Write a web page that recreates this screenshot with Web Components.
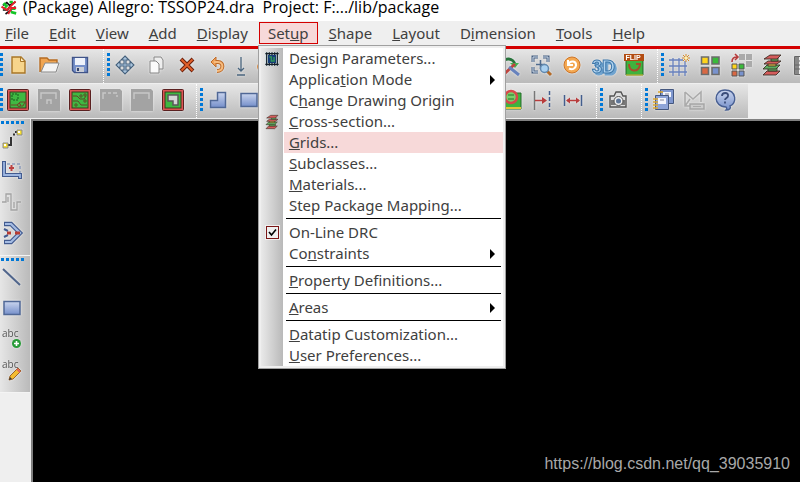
<!DOCTYPE html>
<html lang="en">
<head>
<meta charset="utf-8">
<title>Allegro</title>
<style>
    body {
        margin: 0;
        font: 15px/21px "Noto Sans", "Open Sans", sans-serif;
        color: #404040;
        background: #efefef;
    }
</style>
</head>
<body>
<allegro-window>
    <title-bar slot="title">(Package) Allegro: TSSOP24.dra  Project: F:.../lib/package</title-bar>
    <menu-bar slot="menu">
        <menu-entry><u>F</u>ile</menu-entry>
        <menu-entry><u>E</u>dit</menu-entry>
        <menu-entry><u>V</u>iew</menu-entry>
        <menu-entry><u>A</u>dd</menu-entry>
        <menu-entry><u>D</u>isplay</menu-entry>
        <menu-entry open>Set<u>u</u>p
            <drop-menu slot="popup">
                <menu-item icon="board">Desi<u>g</u>n Parameters...</menu-item>
                <menu-item more>Applica<u>t</u>ion Mode</menu-item>
                <menu-item>C<u>h</u>ange Drawing Origin</menu-item>
                <menu-item icon="section"><u>C</u>ross-section...</menu-item>
                <menu-item active><u>G</u>rids...</menu-item>
                <menu-item><u>S</u>ubclasses...</menu-item>
                <menu-item><u>M</u>aterials...</menu-item>
                <menu-item>Step Package Mapping...</menu-item>
                <menu-line></menu-line>
                <menu-check>On-Line DRC</menu-check>
                <menu-item more>Co<u>n</u>straints</menu-item>
                <menu-line></menu-line>
                <menu-item><u>P</u>roperty Definitions...</menu-item>
                <menu-line></menu-line>
                <menu-item more><u>A</u>reas</menu-item>
                <menu-line></menu-line>
                <menu-item><u>D</u>atatip Customization...</menu-item>
                <menu-item><u>U</u>ser Preferences...</menu-item>
            </drop-menu>
        </menu-entry>
        <menu-entry><u>S</u>hape</menu-entry>
        <menu-entry><u>L</u>ayout</menu-entry>
        <menu-entry>D<u>i</u>mension</menu-entry>
        <menu-entry><u>T</u>ools</menu-entry>
        <menu-entry><u>H</u>elp</menu-entry>
    </menu-bar>

    <tool-row slot="tools">
        <tool-group first>
            <tool-button icon="new" label="New"></tool-button>
            <tool-button icon="open" label="Open"></tool-button>
            <tool-button icon="save" label="Save"></tool-button>
        </tool-group>
        <tool-group>
            <tool-button icon="move" label="Move"></tool-button>
            <tool-button icon="copy" label="Copy"></tool-button>
            <tool-button icon="remove" label="Delete"></tool-button>
            <tool-button icon="undo" label="Undo"></tool-button>
            <tool-button icon="down" label="Undo list" narrow></tool-button>
            <tool-button icon="redo" label="Redo"></tool-button>
            <tool-button icon="down" label="Redo list" narrow></tool-button>
        </tool-group>
        <tool-group>
            <tool-button icon="zoom" label="Zoom points"></tool-button>
            <tool-button icon="zoom" label="Zoom fit"></tool-button>
            <tool-button icon="zoom" label="Zoom in"></tool-button>
            <tool-button icon="zoom" label="Zoom out"></tool-button>
            <tool-button icon="zoom" label="Zoom previous"></tool-button>
            <tool-button icon="zoom" label="Zoom world"></tool-button>
            <tool-button icon="tour" label="Zoom center"></tool-button>
            <tool-button icon="zoom" label="Zoom selection"></tool-button>
            <tool-button icon="redraw" label="Redraw"></tool-button>
            <tool-button icon="view3d" label="3D view"></tool-button>
            <tool-button icon="flip" label="Flip design"></tool-button>
        </tool-group>
        <tool-group grow>
            <tool-button icon="grid" label="Grid toggle"></tool-button>
            <tool-button icon="colors" label="Color"></tool-button>
            <tool-button icon="swap" label="Swap colors"></tool-button>
            <tool-button icon="section" label="Cross-section"></tool-button>
            <tool-button icon="sheet" label="Constraint manager"></tool-button>
        </tool-group>
    </tool-row>
    <tool-row slot="tools">
        <tool-group first>
            <tool-button icon="etch" label="General edit"></tool-button>
            <tool-button icon="off1" label="Placement edit"></tool-button>
            <tool-button icon="route" label="Etch edit"></tool-button>
            <tool-button icon="off2" label="Flow planning"></tool-button>
            <tool-button icon="off3" label="Signal integrity"></tool-button>
            <tool-button icon="shapeEdit" label="Shape edit"></tool-button>
        </tool-group>
        <tool-group>
            <tool-button icon="poly" label="Shape add"></tool-button>
            <tool-button icon="rect" label="Shape add rectangle"></tool-button>
            <tool-button icon="rect" label="Shape add circle"></tool-button>
            <tool-button icon="poly" label="Shape select"></tool-button>
            <tool-button icon="poly" label="Shape void"></tool-button>
        </tool-group>
        <tool-group>
            <tool-button icon="rect" label="Void rectangle"></tool-button>
            <tool-button icon="poly" label="Void element"></tool-button>
            <tool-button icon="rect" label="Island delete"></tool-button>
            <tool-button icon="poly" label="Edit boundary"></tool-button>
            <tool-button icon="target" label="Show element"></tool-button>
            <tool-button icon="toLine" label="Measure"></tool-button>
            <tool-button icon="width" label="Dimension"></tool-button>
        </tool-group>
        <tool-group>
            <tool-button icon="camera" label="Snapshot"></tool-button>
        </tool-group>
        <tool-group>
            <tool-button icon="books" label="Reports"></tool-button>
            <tool-button icon="mail" label="Mail"></tool-button>
            <tool-button icon="help" label="Help"></tool-button>
        </tool-group>
    </tool-row>

    <tool-group slot="side" vertical>
        <tool-button icon="connect" label="Add connect"></tool-button>
        <tool-button icon="slide" label="Slide"></tool-button>
        <tool-button icon="delay" label="Delay tune"></tool-button>
        <tool-button icon="smooth" label="Custom smooth"></tool-button>
    </tool-group>
    <tool-group slot="side" vertical>
        <tool-button icon="line" label="Add line"></tool-button>
        <tool-button icon="rect" label="Add rectangle"></tool-button>
        <tool-button icon="textAdd" label="Add text"></tool-button>
        <tool-button icon="textEdit" label="Edit text"></tool-button>
    </tool-group>

    <a slot="canvas" href="https://blog.csdn.net/qq_39035910">https://blog.csdn.net/qq_39035910</a>
</allegro-window>

<script>
const board = (inner) => `
    <rect x="1.5" y="1.5" width="21" height="21" rx="1" fill="#dc5454" stroke="#5a2020"/>
    <rect x="4" y="4" width="16" height="16" fill="#3fb842" stroke="#3c3a1c"/>${inner}`;
const disabled = (inner) => `
    <path d="M1 1h20l2 2v20H1z" fill="#a3a3a3"/>
    <g fill="none" stroke="#c8c8c8" stroke-width="1.4">${inner}</g>`;
const blueFill = `
    <defs><linearGradient id="b" x2="0" y2="1"><stop stop-color="#cad5ee"/><stop offset="1" stop-color="#758fca"/></linearGradient></defs>`;
const lens = `
    <path d="M18 18l4 4" stroke="#b36a28" stroke-width="3"/>
    <circle cx="15.5" cy="15.5" r="4" fill="#a9d0f0" stroke="#6188ae" stroke-width="1.5"/>`;

const icons = {
    new: `<path d="M6 4h9l4 4v12H6z" fill="#f7d58c" stroke="#a87526" stroke-width="1.4"/><path d="M14.5 4v4.500H19z" fill="#fff0c4" stroke="#a87526"/>`,
    open: `<path d="M3 19V5h7l2 2h8v5" fill="#f0a552" stroke="#b46b22" stroke-width="1.4"/>
        <path d="M4 19l4-9h14l-3 9z" fill="#f4f4f4" stroke="#888"/>`,
    save: `<path d="M4.5 4.5h15v15h-13l-2-2z" fill="#7690ca" stroke="#405488" stroke-width="1.4"/>
        <path d="M7 5h10v7H7z" fill="#eef2fb"/><path d="M8 14h8v5H8z" fill="#c9cdd6"/><path d="M9 15h2v3H9z" fill="#33436d"/>`,
    move: `<path d="M12 3l4 4h-3v4h4V8l4 4-4 4v-3h-4v4h3l-4 4-4-4h3v-4H7v3l-4-4 4-4v3h4V7H8z" fill="#a9c4dd" stroke="#46617c" stroke-width="1.1"/>`,
    copy: `<path d="M10 4h7l2 3v9h-9z" fill="#eee" stroke="#858585"/><path d="M6 8h6l3 3v9H6z" fill="#fafafa" stroke="#858585"/>`,
    remove: `<path d="M6 6l12 12M18 6L6 18" stroke="#6b220d" stroke-width="4"/><path d="M6.500 6.500l11 11M17.500 6.500l-11 11" stroke="#e4602a" stroke-width="1.8"/>`,
    undo: `<path d="M8 9h4c6 0 6 9-1 9" fill="none" stroke="#bd6b2a" stroke-width="4"/><path d="M10 4v10L5 9z" fill="#f1a25a" stroke="#bd6b2a"/>
        <path d="M8 9h4c6 0 6 9-1 9" fill="none" stroke="#f7bc7e" stroke-width="2"/>`,
    redo: `<path d="M15 10h-4c-6 0-6 8 1 8" fill="none" stroke="#d98234" stroke-width="3"/><path d="M14 5v10l5-5z" fill="#f1a25a"/>`,
    down: `<path d="M12 4v14M9 15l3 3 3-3M8 22h8" fill="none" stroke="#49647d" stroke-width="1.3"/>`,
    zoom: `<path d="M4 9V4h5M14 4h5v5M4 14v5h5" fill="none" stroke="#475f80" stroke-width="3"/><path d="M4 9V4h5M14 4h5v5M4 14v5h5" fill="none" stroke="#d3e0ee"/>
        <path d="M11.5 7v9M7 11.5h9" stroke="#4f6b8e" stroke-width="1.6"/>${lens}`,
    tour: `<path d="M4 12c2-9 12-7 13 0" fill="none" stroke="#26733b" stroke-width="3"/><path d="M12 10h9l-4 5z" fill="#3fb452"/>
        <path d="M5 22L17 11" stroke="#be443e" stroke-width="3"/><path d="M11 14l10 8" stroke="#6782bd" stroke-width="3"/>`,
    redraw: `<circle cx="12" cy="12" r="8" fill="#f4a851" stroke="#cb7428"/><path d="M8 7v5h5M8.500 11c2-4 8-3 7.500 1.500-.5 3.500-4 4.500-7 3" fill="none" stroke="#fff" stroke-width="2"/>`,
    view3d: `<text x="1" y="20" font-family="Liberation Sans, sans-serif" font-size="18" font-weight="bold" fill="#aed2ef" stroke="#3d76a8" style="filter: drop-shadow(2px 2px 0 #6fa3cf)">3D</text>`,
    flip: `<path d="M4 7h17v15H4z" fill="#3fb23e" stroke="#25682a"/><path d="M4 22h17" stroke="#e4c63a"/><path d="M7 11c0 8 9 9 11 1M14 11h5" fill="none" stroke="#a94d2c" stroke-width="2"/>
        <path d="M2 1h20v7H2z" fill="#b24c12"/><text x="3.500" y="7" font-family="Liberation Sans, sans-serif" font-size="7" font-weight="bold" fill="#fff">FLIP</text>`,
    grid: `<path d="M6 5v18M12 5v18M18 8v15M2 7h14M2 13h18M2 19h18" stroke="#6780bd" stroke-width="1.3"/>
        <path d="M19 1v8M15 5h8M16 2l6 6M22 2l-6 6" stroke="#d58a2b"/><circle cx="19" cy="5" r="1.5" fill="#fff3b0"/>`,
    colors: `<g stroke="#6c6c6c" stroke-width="1.6"><path d="M3.500 4h7v7h-7z" fill="#ffd51c"/><path d="M14 4h7v7h-7z" fill="#3aba3a"/>
        <path d="M3.500 14.500h7v7h-7z" fill="#d96843"/><path d="M14 14.500h7v7h-7z" fill="#7892cd"/></g>`,
    swap: `<path d="M10 1h6v6h-6zM17 1h6v6h-6zM17 8h6v6h-6z" fill="#aaa"/><g stroke="#555"><path d="M3 11h5v5H3z" fill="#ffd51c"/><path d="M10 11h5v5h-5z" fill="#3aba3a"/>
        <path d="M3 18h5v5H3z" fill="#d96843"/><path d="M10 18h5v5h-5z" fill="#7892cd"/></g><path d="M3 9c0-4 2-5 5-5M6 1l3 3-3 3" fill="none" stroke="#b63a3a" stroke-width="1.6"/>`,
    section: `<g stroke="#3b3027" stroke-width=".9"><path d="M7 18h13l-4 4H3z" fill="#d45c5c"/><path d="M8 15h9v3H8z" fill="#62b865"/><path d="M7 12h13l-4 4H3z" fill="#5eae60"/>
        <path d="M8 10h8v3H8z" fill="#f3c74c"/><path d="M8 8h13l-4 3H4z" fill="#d45c5c"/><path d="M11 5h7v3h-7z" fill="#62b865"/><path d="M10 2h11l-4 4H4l3-2z" fill="#d45c5c"/></g>`,
    sheet: `<path d="M3.500 3.500h22v18h-22z" fill="#eee" stroke="#666"/><path d="M4 4h4v17H4z" fill="#888"/><path d="M8 8h16M4 12h20M4 16h20" stroke="#666"/>
        <path d="M9 4h12v4H9z" fill="#3c5da7"/><path d="M9 12h12v3H9z" fill="#e22"/><path d="M9 17h12v3H9z" fill="#3b3"/>`,
    etch: board(`<path d="M6 6h6v6H6z" fill="none" stroke="#175b1d" stroke-dasharray="2 1"/><path d="M5 17h7l2-3h6M14 18h3l2-4" fill="none" stroke="#704526"/><circle cx="13" cy="17" r="1.5" fill="#3fb842" stroke="#704526"/>`),
    route: board(`<path d="M5 8h4l3 3h4l2-3M5 13h5l3 4h6" fill="none" stroke="#5c4926"/><g fill="#3fb842" stroke="#5c4926"><circle cx="13" cy="8" r="1.2"/><circle cx="17" cy="7" r="1.2"/><circle cx="17" cy="13" r="1.2"/><circle cx="8" cy="17" r="1.2"/></g>`),
    shapeEdit: board(`<path d="M7 7h10v10h-5v-4H7z" fill="#d5d5d5" stroke="#5a5a5a" stroke-width="1.5"/>`),
    off1: disabled(`<path d="M4 11V5h15v6M10 16v-4h4v4"/>`),
    off2: disabled(`<path d="M4 11V5h3M9 5h3M14 5h4M18 7v2"/>`),
    off3: disabled(`<path d="M4 11V5h15v6"/>`),
    poly: `${blueFill}<path d="M11.5 4.500h8v15h-15v-7h7z" fill="url(#b)" stroke="#506896" stroke-width="1.5"/>`,
    rect: `${blueFill}<path d="M4 5.500h16v13H4z" fill="url(#b)" stroke="#506896" stroke-width="1.5"/>`,
    target: `<path d="M3 5h19v16H3z" fill="#3fb23e" stroke="#25682a"/><path d="M3 20h19" stroke="#e4c63a" stroke-width="2"/><circle cx="12" cy="9" r="6" fill="#79d06b" stroke="#d64949" stroke-width="2.5"/><path d="M9 7h6M9 11h6" stroke="#26702a"/>`,
    toLine: `<path d="M4.5 3v19" stroke="#777" stroke-width="1.5"/><path d="M19.500 3v19" stroke="#435e8d" stroke-width="1.5" stroke-dasharray="4 2"/><path d="M5 12.500h8" stroke="#b83c3c" stroke-width="1.5"/><path d="M12 9l5 3.500-5 3.500z" fill="#b83c3c"/>`,
    width: `<path d="M3.500 7v11M20.500 7v11" stroke="#435e8d" stroke-width="1.5"/><path d="M6 12.500h12" stroke="#b83c3c" stroke-width="1.5"/><path d="M5 12.500l4-3v6zM19 12.500l-4-3v6z" fill="#b83c3c"/>`,
    camera: `<path d="M4 8h4l2-4h5l2 4h3v11H4z" fill="#dedede" stroke="#535353" stroke-width="1.4"/><path d="M5 12h14v5H5z" fill="#777"/><circle cx="12.5" cy="13" r="4.500" fill="#eee" stroke="#555"/><circle cx="12.5" cy="13" r="2.500" fill="#607798"/>`,
    books: `${blueFill}<path d="M9.500 1.500h13v14h-13z" fill="#7f97cf" stroke="#44577e"/><path d="M12 4h8v5h-8z" fill="#f4f6fc"/><path d="M4.500 7.500h13v14h-13z" fill="#8fa5d8" stroke="#44577e"/><path d="M7 10h8v6H7z" fill="#f4f6fc"/>
        <path d="M9 12h4M14 6h4" stroke="#889"/><path d="M2 11h5M2 14h5M2 17h5M2 20h5M7 4h5" stroke="#dba62d" stroke-width="1.7"/>`,
    mail: `<path d="M3 4v14h7M3 4l8 7 8-7v10M3 18l5-7" fill="none" stroke="#aaa" stroke-width="1.6"/><path d="M8 16h14v5H8z" fill="#ccc" stroke="#a5a5a5" stroke-width="1.5"/><path d="M11 18.5h8" stroke="#aaa"/>`,
    help: `${blueFill}<path d="M12 2c12 0 12 14 5 16 1 2 0 4-4 4 1-1 1-2 0-3C0 19 0 2 12 2z" fill="url(#b)" stroke="#485f92" stroke-width="1.4"/>
        <path d="M9 8c0-4 7-4 6 0 0 2-3 2-3 4M12 13.500v2" fill="none" stroke="#3b4d7a" stroke-width="1.8"/>`,
    connect: `<path d="M6 17h5V9M13 6.500h2M15 4h3" fill="none" stroke="#333" stroke-width="2"/><path d="M3 15h5v5H3zM17 2h5v5h-5z" fill="#f5dd2f" stroke="#888"/><path d="M4 16h2v2H4zM18 3h2v2h-2z" fill="#fff"/>`,
    slide: `<path d="M7 5h13v11" fill="none" stroke="#6b80af" stroke-dasharray="3 2"/><path d="M4 2v14h16v4" fill="none" stroke="#425b90" stroke-width="4"/><path d="M4 3v13h16v3" fill="none" stroke="#9db6e0" stroke-width="1.8"/><path d="M11.5 6v6M9 9h5" stroke="#bb4141" stroke-width="2"/>`,
    delay: `<path d="M2 12h4V4h5v16h6v-8h4M8 12V7M14 18v-6" fill="none" stroke="#a3a3a3" stroke-width="1.3"/>`,
    smooth: `<path d="M4 3h7l9 9-9 9H4" fill="none" stroke="#425b90" stroke-width="4.5"/><path d="M5 3h6l9 9-9 9H5" fill="none" stroke="#a5bce3" stroke-width="2.2"/>
        <path d="M4 8l4 2M4 16l4-2" stroke="#425b90" stroke-width="2"/><path d="M7 12h4M15 12h5" stroke="#b93c32" stroke-width="3"/>`,
    line: `<path d="M3 4l17 16" stroke="#50658b" stroke-width="2"/>`,
    textAdd: `<text x="2" y="10" font-family="Open Sans, sans-serif" font-size="10" fill="#555">abc</text><circle cx="16.5" cy="16.5" r="4.500" fill="#279b37"/><path d="M16.5 14v5M14 16.500h5" stroke="#fff" stroke-width="1.6"/>`,
    textEdit: `<text x="2" y="10" font-family="Open Sans, sans-serif" font-size="10" fill="#555">abc</text><path d="M9 22l1-4 8-8 3 3-8 8z" fill="#f4bc32" stroke="#9b622b"/><path d="M9 22l1-3 2 2z" fill="#333"/><path d="M17 11l3 3" stroke="#e2635b" stroke-width="2"/>`,
    board: `<path d="M2 2h20v20H2z" fill="#c9dde0"/><path d="M4 2v20M8 2v20M12 2v20M16 2v20M20 2v20M2 4h20M2 20h20" stroke="#151d27" stroke-width="1.8"/>
        <path d="M6 6h12v12H6z" fill="#163c77"/><path d="M8 9h3v6h4V9" fill="none" stroke="#2d955a" stroke-width="2.2"/>`,
    logo: `<path d="M2 3h20v17H2z" fill="#fff"/><path d="M2 8l6-4 4 4 9-5M2 15h7l4-6M6 21l15-11" fill="none" stroke="#111" stroke-width="2.500"/>
        <path d="M3 5l6 5M14 18l8 2M12 3h5M3 13l4-2M15 13h6" stroke="#13c526" stroke-width="4"/><path d="M0 10l8 5L21 2M10 21l5-9h7" fill="none" stroke="#e5222a" stroke-width="3"/>`
};
const svg = (name, size = 24) => `<svg width="${size}" height="${size}" viewBox="0 0 24 24" aria-hidden="true">${icons[name]}</svg>`;

class BaseElement extends HTMLElement {
    constructor() {
        super();
        this.attachShadow({mode: "open"});
    }
    connectedCallback() {
        const template = document.createElement('template');
        template.innerHTML = this.getTemplate();
        this.shadowRoot.replaceChildren(template.content);
    }
}

class AllegroWindow extends BaseElement {
    getTemplate() {
        return /*html*/`
        <style>
            :host { display: flex; flex-direction: column; min-height: 100vh; }
            .tools { display: flex; flex-direction: column; gap: 1px; overflow: hidden; }
            .work { display: flex; flex: 1; }
            .side { width: 30px; margin-top: 1px; }
            .canvas {
                flex: 1;
                display: flex;
                align-items: flex-end;
                justify-content: flex-end;
                margin: 1px 0 0 1px;
                padding: 8px 10px;
                border: solid #808080;
                border-width: 2px 0 0 2px;
                background: #000;
            }
            ::slotted(a) {
                font: 16px/21px "Liberation Sans", Arial, sans-serif;
                color: #a8a8a8;
                text-decoration: none;
            }
        </style>
        <slot name="title"></slot>
        <slot name="menu"></slot>
        <div class="tools"><slot name="tools"></slot></div>
        <div class="work">
            <div class="side"><slot name="side"></slot></div>
            <main class="canvas"><slot name="canvas"></slot></main>
        </div>`;
    }
}

class TitleBar extends BaseElement {
    getTemplate() {
        return /*html*/`
        <style>
            :host {
                display: flex;
                gap: 4px;
                height: 21px;
                font: 16px/14px "Open Sans", "Noto Sans", sans-serif;
                white-space: pre;
                color: #000;
                background: #fff;
            }
            svg { width: 19px; height: 16px; }
        </style>${svg('logo')}<slot></slot>`;
    }
}

class MenuBar extends BaseElement {
    getTemplate() {
        return /*html*/`
        <style>
            :host {
                display: block;
                padding: 1px 0 2px;
                border-bottom: 3px solid #d40000;
                background: #efefef;
            }
            nav { display: flex; margin-left: -5px; }
        </style>
        <nav><slot></slot></nav>`;
    }
}

class MenuEntry extends BaseElement {
    getTemplate() {
        return /*html*/`
        <style>
            :host { display: block; position: relative; }
            button {
                display: block;
                height: 22px;
                padding: 0 9px;
                border: 1px solid transparent;
                background: none;
                font: inherit;
                line-height: 20px;
                color: inherit;
            }
            :host([open]) button { padding: 0 8px; border-color: #d40000; background: #f7d9d9; }
            :host([open]) { padding: 0 1px; }
            ::slotted(drop-menu) { position: absolute; top: 23px; left: 0; z-index: 1; }
        </style>
        <button><slot></slot></button>
        <slot name="popup"></slot>`;
    }
}

class DropMenu extends BaseElement {
    getTemplate() {
        return /*html*/`
        <style>
            :host {
                display: block;
                width: 242px;
                padding: 2px;
                border: 1px solid #a0a0a0;
                background: #efefef;
            }
            .list { background: linear-gradient(90deg, #e9e9e9, #b9b9b9 22px, #fff 22px); }
        </style>
        <div class="list"><slot></slot></div>`;
    }
}

class MenuItem extends BaseElement {
    getTemplate() {
        const icon = this.getAttribute('icon');
        return /*html*/`
        <style>
            :host { display: block; }
            button {
                display: grid;
                grid-template-columns: 23px 1fr 20px;
                width: 100%;
                padding: 0;
                border: 0;
                background: none;
                font: inherit;
                color: inherit;
                text-align: left;
                white-space: nowrap;
            }
            .icon { display: grid; place-items: center; height: 21px; }
            .text { padding-left: 5px; }
            .more { display: grid; place-items: center; }
            :host([active]) .text, :host([active]) .more { background: #f7d9d9; }
            path.arrow { fill: #000; }
        </style>
        <button>
            <span class="icon">${icon ? svg(icon, 16) : ''}</span>
            <span class="text"><slot></slot></span>
            <span class="more">${this.hasAttribute('more') ? '<svg width="5" height="10" viewBox="0 0 5 10"><path class="arrow" d="M0 0l5 5-5 5z"/></svg>' : ''}</span>
        </button>`;
    }
}

class MenuCheck extends BaseElement {
    getTemplate() {
        return /*html*/`
        <style>
            :host { display: block; }
            label { display: grid; grid-template-columns: 23px 1fr; align-items: center; }
            input {
                appearance: none;
                justify-self: center;
                width: 13px;
                height: 13px;
                margin: 0;
                border: 1px solid #7a1616;
                outline: 1px solid #efefef;
                background: #efefef;
            }
            input:checked {
                background: #efefef url('data:image/svg+xml,<svg xmlns="http://www.w3.org/2000/svg" viewBox="0 0 11 11"><path d="M2 5l2.500 3L9 2.500" fill="none" stroke="black" stroke-width="1.6"/></svg>');
            }
            span { padding-left: 5px; }
        </style>
        <label><input type="checkbox" checked><span><slot></slot></span></label>`;
    }
}

class MenuLine extends BaseElement {
    getTemplate() {
        return /*html*/`
        <style>
            :host { display: block; padding: 2px 2px 3px 25px; }
            div { height: 1px; background: #000; }
        </style>
        <div></div>`;
    }
}

class ToolRow extends BaseElement {
    getTemplate() {
        return /*html*/`
        <style>
            :host { display: flex; height: 34px; }
        </style>
        <slot></slot>`;
    }
}

class ToolGroup extends BaseElement {
    getTemplate() {
        return /*html*/`
        <style>
            :host {
                display: flex;
                flex: none;
                box-sizing: border-box;
                padding: 0 8px 3px 3px;
                border-left: 1px dotted #fff;
                background: linear-gradient(#e6e6e6, #bababa);
            }
            :host([first]) { padding-left: 0; border-left: 0; }
            :host([grow]) { flex: 1 0 auto; }
            .grip {
                width: 3px;
                height: 23px;
                margin: 4px -1px 0 0;
                background: repeating-linear-gradient(#0078d7 0 3px, transparent 3px 5px);
            }
            :host([vertical]) {
                flex-direction: column;
                width: 30px;
                padding: 2px 6px 7px 0;
                border: 0;
                border-bottom: 1px solid #f4f4f4;
                background: linear-gradient(90deg, #e6e6e6, #bababa);
            }
            :host([vertical]) .grip {
                width: 23px;
                height: 3px;
                margin: 0 0 0 1px;
                background: repeating-linear-gradient(90deg, #0078d7 0 3px, transparent 3px 5px);
            }
        </style>
        <div class="grip"></div>
        <slot></slot>`;
    }
}

class ToolButton extends BaseElement {
    getTemplate() {
        return /*html*/`
        <style>
            :host { display: block; flex: none; }
            button {
                display: flex;
                align-items: center;
                justify-content: center;
                width: 31px;
                height: 31px;
                padding: 0;
                border: 0;
                background: none;
            }
            :host([narrow]) button { width: 15px; }
            :host-context([vertical]) button { width: 24px; }
            svg { flex: none; overflow: visible; filter: drop-shadow(0 0 1px #eee); }
        </style>
        <button aria-label="${this.getAttribute('label')}">${svg(this.getAttribute('icon'))}</button>`;
    }
}

customElements.define('allegro-window', AllegroWindow);
customElements.define('title-bar', TitleBar);
customElements.define('menu-bar', MenuBar);
customElements.define('menu-entry', MenuEntry);
customElements.define('drop-menu', DropMenu);
customElements.define('menu-item', MenuItem);
customElements.define('menu-check', MenuCheck);
customElements.define('menu-line', MenuLine);
customElements.define('tool-row', ToolRow);
customElements.define('tool-group', ToolGroup);
customElements.define('tool-button', ToolButton);
</script>
</body>
</html>
